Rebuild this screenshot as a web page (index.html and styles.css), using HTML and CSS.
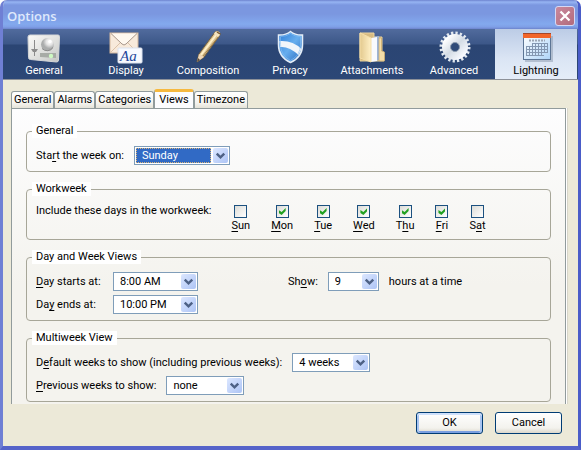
FILE: index.html
```
<!DOCTYPE html>
<html lang="en">
<head>
<meta charset="utf-8">
<title>Options</title>
<link rel="stylesheet" href="styles.css">
</head>
<body>
<svg class="defs" aria-hidden="true">
  <symbol id="arrow" viewBox="0 0 16 15">
    <path d="M4 5.5 8 9.5 12 5.5" fill="none" stroke="#4d6185" stroke-width="2.6"/>
  </symbol>
</svg>
<main class="window">
  <header class="titlebar">
    <h1>Options</h1>
    <button class="close" type="button" aria-label="Close">
      <svg viewBox="0 0 18 18"><path d="M4.500 4.500 13.500 13.500M13.500 4.500 4.500 13.500" stroke="#fff" stroke-width="2.300"/></svg>
    </button>
  </header>

  <nav class="toolbar">
    <button type="button" class="tool">
      <svg viewBox="0 0 34 34">
        <defs><linearGradient id="metal" x1="0" y1="0" x2="1" y2="1"><stop offset="0" stop-color="#fafaf8"/><stop offset=".6" stop-color="#dcdddb"/><stop offset="1" stop-color="#c2c4c3"/></linearGradient>
        <radialGradient id="knob" cx=".65" cy=".3"><stop offset="0" stop-color="#fff"/><stop offset=".5" stop-color="#e4e4e4"/><stop offset="1" stop-color="#aaacac"/></radialGradient></defs>
        <path d="M3 5h28q1.500 0 1.500 1.500l-1 23.500q0 2-2 2L3.500 29.500q-2 0-2-2L1 7q0-2 2-2z" fill="url(#metal)" stroke="#d5d7d8"/>
        <path d="M7.500 10v16" stroke="#8a8a8a"/><path d="M4 19h7l-2 3H6z" fill="#8c8c8c"/>
        <circle cx="20.500" cy="14.500" r="6.500" fill="url(#knob)"/><path d="M15 18.500a7 7 0 0 0 11-1" fill="none" stroke="#8a8a8a"/>
        <circle cx="23" cy="11.500" r="1.700" fill="#fff"/>
        <path d="M13 23h16v5l-16-1z" fill="#a7aba6"/><circle cx="24" cy="26" r="2.200" fill="#cdf8c2"/>
      </svg>
      <span>General</span>
    </button>
    <button type="button" class="tool">
      <svg viewBox="0 0 34 34">
        <rect x="1" y="3" width="28" height="20" fill="#f8eadb" stroke="#d3b79d"/>
        <path d="M1 23 12 12M29 23 18 12" stroke="#dcc2a8"/><path d="M2 3.500 13 14q2 2 4 0L28 3.500" fill="#fff8ef" stroke="#a8968a"/>
        <rect x="9" y="18" width="24" height="15" rx="1" fill="#f8faff" stroke="#dce3ef"/>
        <text x="11" y="31" class="sample">Aa</text>
      </svg>
      <span>Display</span>
    </button>
    <button type="button" class="tool">
      <svg viewBox="0 0 34 34">
        <path d="M6 32 8 24 24 2q3-2 5 1v2L13 27z" fill="#dcc391" stroke="#74603f"/>
        <path d="M10 25 25 5" stroke="#fff0c8" stroke-width="2"/><path d="M12 26 28 6" stroke="#a3824d" stroke-width="1"/>
        <path d="M24 2q3-2 5 1v2l-2 2-4-3z" fill="#f4e4c1"/><path d="M26 2l3 2" stroke="#7b5c36" stroke-width="1.500"/>
        <path d="M6 32l2-8 5 3z" fill="#efd8b8"/><path d="M6 32l1-4 2 2z" fill="#54483e"/>
      </svg>
      <span>Composition</span>
    </button>
    <button type="button" class="tool">
      <svg viewBox="0 0 34 34">
        <defs><linearGradient id="blue" x1="0" y1="0" x2="1" y2="1"><stop offset="0" stop-color="#2c7bd6"/><stop offset=".5" stop-color="#67aeee"/><stop offset="1" stop-color="#2868bd"/></linearGradient></defs>
        <path d="M17.500 1.500q5 4 12 3.500v10q0 12-12 17.500Q5.500 27 5.500 15V5q7 .5 12-3.500z" fill="url(#blue)" stroke="#e5eef8" stroke-width="1.500"/>
        <path d="M6.500 11q13-1 22 8l-3 6Q16 16 7 17z" fill="#f1f5fa"/>
        <path d="M17.500 3.500q4 3 10 3v8q0 11-10 16-10-5-10-16v-8q6 0 10-3z" fill="none" stroke="#8dc2f1" opacity=".6"/>
      </svg>
      <span>Privacy</span>
    </button>
    <button type="button" class="tool">
      <svg viewBox="0 0 34 34">
        <defs><linearGradient id="folder"><stop offset="0" stop-color="#e3c98e"/><stop offset="1" stop-color="#fff0c6"/></linearGradient></defs>
        <path d="M5 3h14v4h8v15h2v9H5z" fill="#d7bb82" stroke="#ecd49d"/>
        <path d="M19 7l5-1v24l-5 1z" fill="#9db4d5"/><path d="M16 8l6-1v24l-6 1z" fill="#f8faff"/>
        <path d="M24 8h2.500v13l3 1v9H24z" fill="#f4dda8" stroke="#c4a363" stroke-width=".6"/>
        <path d="M5 3l11 5v24L5 28z" fill="url(#folder)" stroke="#f5dfa9"/>
      </svg>
      <span>Attachments</span>
    </button>
    <button type="button" class="tool">
      <svg viewBox="0 0 34 34">
        <defs><linearGradient id="steel" x1="0" y1="0" x2="1" y2="1"><stop offset="0" stop-color="#fff"/><stop offset=".5" stop-color="#d4dce5"/><stop offset="1" stop-color="#f8faff"/></linearGradient></defs>
        <circle cx="18" cy="17" r="13.500" fill="none" stroke="#e3e9f0" stroke-width="4" stroke-dasharray="2.200 2.040"/>
        <circle cx="18" cy="17" r="8.500" fill="none" stroke="url(#steel)" stroke-width="9"/>
        <circle cx="18" cy="17" r="4.500" fill="#304b78" stroke="#8d9caf"/>
      </svg>
      <span>Advanced</span>
    </button>
    <button type="button" class="tool selected" aria-current="page">
      <svg viewBox="0 0 34 34">
        <defs><linearGradient id="page" x1="0" y1="0" x2="1" y2="1"><stop offset="0" stop-color="#fff"/><stop offset="1" stop-color="#aed4f8"/></linearGradient></defs>
        <path d="M6 6h28v26H6z" fill="#8a98ab" opacity=".5"/>
        <rect x="4.500" y="3.500" width="27" height="26" fill="url(#page)" stroke="#5c7595"/>
        <path d="M4 3h28v5H4z" fill="#f2652a"/><path d="M4 3.500h28" stroke="#a5462a"/>
        <path d="M10 10.500h16" stroke="#9ba5b3" stroke-width="2" stroke-dasharray="2 1"/>
        <path d="M13 13.500h16M7 16.500h22M7 19.500h22M7 22.500h22M7 25.500h18M7.500 16v10M10.500 16v10M13.500 13v13M16.500 13v13M19.500 13v13M22.500 13v13M25.500 13v10M28.500 13v10" stroke="#8497b1"/>
      </svg>
      <span>Lightning</span>
    </button>
  </nav>

  <div class="content">
    <div class="tabs" role="tablist">
      <button type="button" role="tab">General</button>
      <button type="button" role="tab">Alarms</button>
      <button type="button" role="tab">Categories</button>
      <button type="button" role="tab" class="active" aria-selected="true">Views</button>
      <button type="button" role="tab">Timezone</button>
    </div>
    <form class="panel" id="views">
      <fieldset>
        <legend>General</legend>
        <div class="row">
          <label for="week-start">Sta<u>r</u>t the week on:</label>
          <span class="combo wide focused"><select id="week-start"><option>Sunday</option><option>Monday</option></select><svg><use href="#arrow"/></svg></span>
        </div>
      </fieldset>

      <fieldset>
        <legend>Workweek</legend>
        <div class="workweek">
          <span class="caption">Include these days in the workweek:</span>
          <div class="days">
            <label><input type="checkbox"><span><u>S</u>un</span></label>
            <label><input type="checkbox" checked><span><u>M</u>on</span></label>
            <label><input type="checkbox" checked><span><u>T</u>ue</span></label>
            <label><input type="checkbox" checked><span><u>W</u>ed</span></label>
            <label><input type="checkbox" checked><span>T<u>h</u>u</span></label>
            <label><input type="checkbox" checked><span><u>F</u>ri</span></label>
            <label><input type="checkbox"><span>S<u>a</u>t</span></label>
          </div>
        </div>
      </fieldset>

      <fieldset>
        <legend>Day and Week Views</legend>
        <div class="hours">
          <div class="times">
            <label for="day-start"><u>D</u>ay starts at:</label>
            <span class="combo"><select id="day-start"><option>8:00 AM</option></select><svg><use href="#arrow"/></svg></span>
            <label for="day-end">Da<u>y</u> ends at:</label>
            <span class="combo"><select id="day-end"><option>10:00 PM</option></select><svg><use href="#arrow"/></svg></span>
          </div>
          <div class="row">
            <label for="visible">Sh<u>o</u>w:</label>
            <span class="combo narrow"><select id="visible"><option>9</option></select><svg><use href="#arrow"/></svg></span>
            <span>hours at a time</span>
          </div>
        </div>
      </fieldset>

      <fieldset>
        <legend>Multiweek View</legend>
        <div class="stack">
          <div class="row">
            <label for="weeks">D<u>e</u>fault weeks to show (including previous weeks):</label>
            <span class="combo medium"><select id="weeks"><option>4 weeks</option></select><svg><use href="#arrow"/></svg></span>
          </div>
          <div class="row">
            <label for="previous"><u>P</u>revious weeks to show:</label>
            <span class="combo medium"><select id="previous"><option>none</option></select><svg><use href="#arrow"/></svg></span>
          </div>
        </div>
      </fieldset>
    </form>
  </div>
  <footer class="actions">
    <button type="submit" form="views" class="default">OK</button>
    <button type="button">Cancel</button>
  </footer>
</main>
</body>
</html>
```

FILE: styles.css
```
* { box-sizing: border-box; }
body { margin: 0; background: #fff; color: #000; font: 11px/14px Roboto, "DejaVu Sans Condensed", sans-serif; }
button, select, input { font: inherit; color: inherit; margin: 0; }
u { text-underline-offset: 2px; text-decoration-skip-ink: none; }
.defs { position: absolute; width: 0; height: 0; }

.window {
  display: flex;
  flex-direction: column;
  min-height: 100vh;
  border: solid #6f7fd4;
  border-width: 0 3px 4px;
  border-right-color: #4a5cc8;
  border-bottom-color: #5563c9;
  border-radius: 7px 7px 0 0;
  background: #ece9d8;
  overflow: hidden;
}
.titlebar {
  display: flex;
  align-items: center;
  justify-content: space-between;
  height: 29px;
  padding: 3px 4px 0 5px;
  margin: 0 -1px;
  background: linear-gradient(#6d83cf 0, #96b4f3 2px, #7b97e0 5px, #7b97e0 14px, #83a9ee 24px, #7f9fe6 27px, #6c83cc);
}
h1 { margin: 0; font: 600 13px/18px "Open Sans", sans-serif; color: #dfe9fc; }
.close { width: 20px; height: 20px; padding: 0; border: 1px solid #d6d8f4; border-radius: 3px; background: linear-gradient(135deg, #c9899d, #b26a7c); }
.close svg { display: block; width: 18px; height: 18px; }

.toolbar {
  display: grid;
  grid-template-columns: repeat(7, 1fr);
  height: 51px;
  border-bottom: 1px solid #8d9198;
  padding-right: 1px;
  background: linear-gradient(#516b9d, #3c5788 15px, #2b4573 16px, #2c4776);
}
.tool { display: flex; flex-direction: column; align-items: center; padding: 1px 0 0; border: 0; background: none; color: #fff; line-height: 14px; }
.tool svg { width: 34px; height: 34px; }
.tool.selected { color: #000; background: linear-gradient(#bccce6, #dbe5f4 60%, #e5edf8); }
.sample { font: italic 15px "Liberation Serif", serif; fill: #24479a; }

.content { padding: 9px 12px 0 8px; }
.tabs { display: flex; align-items: flex-end; height: 19px; }
.tabs button {
  height: 17px;
  padding: 0 2px;
  border: 1px solid #919b9c;
  border-bottom: 0;
  border-radius: 3px 3px 0 0;
  background: linear-gradient(#fff, #f4f3ee 70%, #e5e2d8);
  line-height: 16px;
}
.tabs .active { height: 19px; padding: 0 4px; border-top: 3px solid #f6b93f; background: #fcfcfe; line-height: 14px; }
.panel {
  display: flex;
  flex-direction: column;
  gap: 10px;
  padding: 15px 14px 2px;
  border: solid #919b9c;
  border-width: 1px 1px 0;
  box-shadow: 1px 0 #fff, 2px 0 #d7d5ca;
  background: linear-gradient(#fdfdfe, #f4f3ee 60%);
}
fieldset { min-width: 0; margin: 0; padding: 8px 9px 6px; border: 1px solid #a7a698; border-radius: 4px; }
legend { margin-left: -4px; padding: 0 4px; background: #fff; line-height: 14px; }
.row { display: flex; align-items: center; gap: 10px; }
.stack { display: grid; gap: 4px; }

.combo { position: relative; display: block; width: 85px; height: 19px; border: 1px solid #7f9db9; background: #fff; }
.combo.wide { width: 96px; }
.combo.medium { width: 78px; }
.combo.narrow { width: 51px; }
.combo select { display: block; appearance: none; width: 100%; height: 17px; padding: 0 18px 0 6px; border: 0; border-radius: 0; outline: 0; background: none; }
.combo svg { position: absolute; top: 1px; right: 1px; width: 15px; height: 15px; border-radius: 2px; background: linear-gradient(135deg, #dce7ff, #adc4f5); pointer-events: none; }
.combo.focused select { width: 75px; height: 15px; margin: 1px; padding: 0 0 0 5px; border: 1px dotted #d9b478; background: #316ac5; color: #fff; line-height: 13px; }

.workweek { display: flex; gap: 20px; padding-top: 1px; }
.caption { line-height: 12px; }
.days { display: flex; gap: 21px; }
.days label { display: flex; flex-direction: column; align-items: center; gap: 1px; }
.days input { appearance: none; display: grid; place-items: center; width: 13px; height: 13px; border: 1px solid #1c5180; background: linear-gradient(135deg, #dcdcd7, #fff); }
.days input:checked::before { content: ""; width: 7px; height: 7px; background: #21a121; clip-path: polygon(0 29%, 43% 57%, 100% 0, 100% 43%, 43% 100%, 0 71%); }

.hours { display: flex; align-items: flex-start; gap: 90px; }
.times { display: grid; grid-template-columns: 67px 85px; align-items: center; gap: 4px 10px; }

.actions { display: flex; justify-content: flex-end; gap: 12px; padding: 8px 16px 12px; }
.actions button { width: 67px; height: 22px; padding: 0; border: 1px solid #003c74; border-radius: 3px; background: linear-gradient(#fff, #f3f2ed 75%, #dcd7cb); }
.actions .default { box-shadow: inset 0 2px #cee0fb, inset 2px 0 #a9c5f1, inset -2px 0 #a9c5f1, inset 0 -2px #7b9fe0; }
```
